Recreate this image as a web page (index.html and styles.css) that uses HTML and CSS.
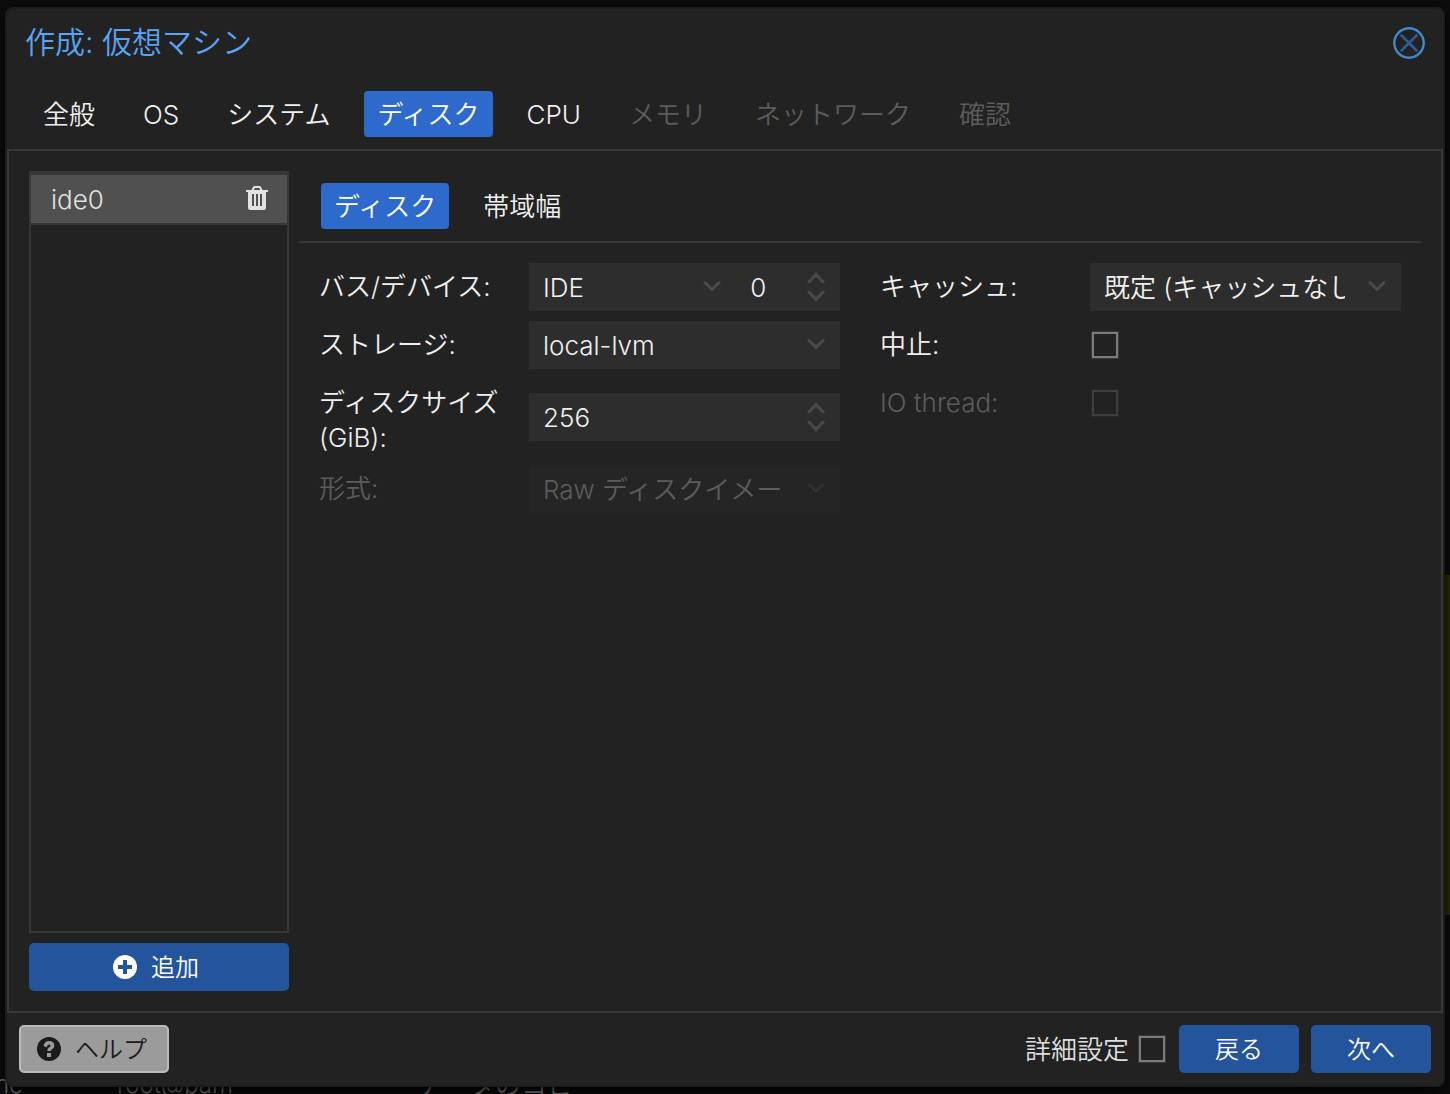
FILE: index.html
```html
<!DOCTYPE html>
<html lang="ja">
<head>
<meta charset="utf-8">
<meta name="viewport" content="width=device-width, initial-scale=1">
<title>作成: 仮想マシン</title>
<link rel="stylesheet" href="styles.css">
</head>
<body>
<svg class="defs" aria-hidden="true">
  <symbol id="down" viewBox="0 0 18 12"><path d="M2 2.5l7 7 7-7" fill="none" stroke="currentColor" stroke-width="3" stroke-linecap="round"/></symbol>
  <symbol id="updown" viewBox="0 0 18 30"><path d="M2 10l7-7.500 7 7.500M2 20l7 7.500 7-7.500" fill="none" stroke="currentColor" stroke-width="3" stroke-linecap="round"/></symbol>
</svg>
<div class="backdrop" aria-hidden="true">
  <div class="notice-strip"></div>
  <div class="log-row"><span class="log-node">ne</span><span class="log-user">root@pam</span><span class="log-task">データのコピー</span></div>
</div>
<main class="dialog">
  <header class="dialog-header">
    <h1 class="title">作成: 仮想マシン</h1>
    <button class="close" type="button" aria-label="閉じる">
      <svg width="32" height="32" viewBox="0 0 32 32" fill="none"><circle cx="16" cy="16" r="14.700" stroke="#4387cb" stroke-width="2.400"/><path d="M8.500 8.500l15 15M23.500 8.500l-15 15" stroke="#2d5c98" stroke-width="2.600" stroke-linecap="round"/></svg>
    </button>
  </header>
  <nav class="tabs">
    <button class="tab" type="button">全般</button>
    <button class="tab" type="button">OS</button>
    <button class="tab" type="button">システム</button>
    <button class="tab active" type="button">ディスク</button>
    <button class="tab" type="button">CPU</button>
    <button class="tab" type="button" disabled>メモリ</button>
    <button class="tab" type="button" disabled>ネットワーク</button>
    <button class="tab" type="button" disabled>確認</button>
  </nav>
  <section class="content">
    <aside class="disks">
      <ul class="disk-list">
        <li class="disk-item">
          <span>ide0</span>
          <button class="trash" type="button" aria-label="削除">
            <svg width="22" height="26" viewBox="0 0 22 26"><path fill="#e2e2e2" fill-rule="evenodd" d="M0 4h5.500l1.300-2.700Q7.300 0 8.800 0h4.400q1.500 0 2 1.300L16.500 4H22v2h-2v15.500q0 2.500-2.500 2.500h-13Q2 24 2 21.500V6H0zM7.800 4h6.400l-1-2H8.800zM6 8v12h2V8zm4 0v12h2V8zm4 0v12h2V8z"/></svg>
          </button>
        </li>
      </ul>
      <button class="button primary" type="button">
        <svg width="24" height="24" viewBox="0 0 24 24"><circle cx="12" cy="12" r="12" fill="#fff"/><path d="M10 5h4v5h5v4h-5v5h-4v-5H5v-4h5z" fill="#24549c"/></svg>
        追加
      </button>
    </aside>
    <div class="editor">
      <nav class="tabs subtabs">
        <button class="tab active" type="button">ディスク</button>
        <button class="tab" type="button">帯域幅</button>
      </nav>
      <form class="form">
        <div class="column">
          <div class="row">
            <label class="label" for="bus">バス/デバイス:</label>
            <div class="fields">
              <div class="field bus"><select class="control" id="bus"><option>IDE</option></select><svg class="arrow"><use href="#down"/></svg></div>
              <div class="field device"><input class="control" type="number" value="0" aria-label="デバイス"><svg class="arrow spin"><use href="#updown"/></svg></div>
            </div>
          </div>
          <div class="row">
            <label class="label" for="storage">ストレージ:</label>
            <div class="fields"><div class="field"><select class="control" id="storage"><option>local-lvm</option></select><svg class="arrow"><use href="#down"/></svg></div></div>
          </div>
          <div class="row">
            <label class="label" for="size">ディスクサイズ (GiB):</label>
            <div class="fields"><div class="field"><input class="control" type="number" id="size" value="256"><svg class="arrow spin"><use href="#updown"/></svg></div></div>
          </div>
          <div class="row off">
            <label class="label" for="format">形式:</label>
            <div class="fields"><div class="field"><select class="control" id="format" disabled><option>Raw ディスクイメージ (raw)</option></select><svg class="arrow"><use href="#down"/></svg></div></div>
          </div>
        </div>
        <div class="column">
          <div class="row">
            <label class="label" for="cache">キャッシュ:</label>
            <div class="fields"><div class="field"><select class="control" id="cache"><option>既定 (キャッシュなし)</option></select><svg class="arrow"><use href="#down"/></svg></div></div>
          </div>
          <div class="row">
            <label class="label" for="discard">中止:</label>
            <div class="fields"><input class="check" type="checkbox" id="discard"></div>
          </div>
          <div class="row off">
            <label class="label" for="iothread">IO thread:</label>
            <div class="fields"><input class="check" type="checkbox" id="iothread" disabled></div>
          </div>
        </div>
      </form>
    </div>
  </section>
  <footer class="footer">
    <button class="button help" type="button">
      <svg width="24" height="24" viewBox="0 0 24 24"><circle cx="12" cy="12" r="12" fill="#1b1b1b"/><path d="M6.500 9Q7.500 4 12 4q5.300.2 5.300 4.700 0 2.300-2.300 3.500-1.200.8-1.200 1.800h-3.500q0-2.600 1.800-3.700 1.700-.8 1.500-1.800-.3-1.200-1.700-1.100-1.300 0-2.200 2.800zM10 16h4v4h-4z" fill="#9b9b9b"/></svg>
      ヘルプ
    </button>
    <label class="advanced">詳細設定 <input class="check" type="checkbox"></label>
    <button class="button primary wide" type="button">戻る</button>
    <button class="button primary wide" type="button">次へ</button>
  </footer>
</main>
</body>
</html>
```
FILE: styles.css
```css
* { box-sizing: border-box; }
body {
  margin: 0;
  min-height: 100vh;
  padding: 7px 5px;
  display: flex;
  background: #0d0d0d;
  color: #f0f0f0;
  font: 350 26px/35px Inter, "Noto Sans CJK JP", sans-serif;
}
button, input, select { font: inherit; color: inherit; }
button { border: 0; padding: 0; background: none; }
.defs { position: absolute; width: 0; height: 0; }

.backdrop { position: absolute; inset: 0; overflow: hidden; z-index: -1; }
.notice-strip { position: absolute; right: 0; top: 575px; width: 20px; height: 340px; background: #303200; }
.log-row { position: absolute; left: -5px; bottom: -8px; display: flex; color: #888; font-size: 24px; }
.log-node { width: 122px; }
.log-user { width: 300px; }
.log-task { font-size: 26px; }

.dialog {
  flex: 1;
  min-width: 0;
  display: flex;
  flex-direction: column;
  border: 2px solid #1c1c1c;
  border-radius: 8px;
  background: #222;
  box-shadow: 0 4px 16px #000;
}
.dialog-header { display: flex; justify-content: space-between; align-items: center; height: 70px; padding: 0 18px 2px; }
.title { margin: 0; padding-bottom: 2px; font-size: 30px; font-weight: 350; color: #5ba4f5; }
.close { display: flex; }

.tabs { display: flex; gap: 20px; padding: 12px 22px; }
.tab { height: 46px; padding: 0 14px; border-radius: 4px; white-space: nowrap; }
.tab.active { padding: 0 13px; background: #2d6acb; color: #fff; }
.tab:disabled { color: #5c5c5c; }

.content { flex: 1; display: flex; gap: 10px; padding: 20px; border: 2px solid #373737; }
.disks { width: 260px; display: flex; flex-direction: column; gap: 10px; }
.disk-list { flex: 1; margin: 0; padding: 0; list-style: none; border: 2px solid #373737; border-top-width: 4px; }
.disk-item {
  display: flex;
  justify-content: space-between;
  align-items: center;
  height: 50px;
  padding: 0 19px 0 20px;
  background: #505050;
  border-bottom: 2px solid #373737;
  color: #e2e2e2;
}
.trash { display: flex; }

.button {
  height: 48px;
  display: flex;
  align-items: center;
  justify-content: center;
  gap: 14px;
  padding-right: 6px;
  border-radius: 5px;
  font-size: 24px;
}
.primary { background: #24549c; color: #fff; }
.wide { width: 120px; padding: 0; }
.help { width: 150px; padding-right: 4px; background: #9b9b9b; border: 2px solid #bababa; color: #1b1b1b; }

.editor { flex: 1; min-width: 0; }
.subtabs { border-bottom: 2px solid #373737; }
.form { display: grid; grid-template-columns: 1fr 1fr; gap: 40px; padding: 20px; }
.column { min-width: 0; display: flex; flex-direction: column; gap: 10px; }
.row { display: flex; min-height: 48px; }
.label { flex: none; width: 210px; padding: 6px 20px 0 0; }
.fields { flex: 1; min-width: 0; display: flex; align-items: center; }
.field { position: relative; flex: 1; min-width: 0; }
.field.bus { flex: 2; }
.control {
  display: block;
  width: 100%;
  height: 48px;
  padding: 0 56px 0 14px;
  border: 0;
  border-radius: 0;
  background: #2d2d2d;
  appearance: none;
  -moz-appearance: textfield;
}
.device .control { padding-right: 36px; }
.control::-webkit-inner-spin-button { appearance: none; }
.arrow { position: absolute; right: 15px; top: 17px; width: 18px; height: 12px; color: #4a4a4a; pointer-events: none; }
.arrow.spin { top: 9px; height: 30px; }
.off { color: #5c5c5c; }
.off .control { background: #252525; color: #5c5c5c; opacity: 1; }
.off .arrow { color: #303030; }

.check { flex: none; width: 26px; height: 26px; margin: 0 2px; border: 2px solid #7c7c7c; outline: 1px solid #383838; appearance: none; }
.check:disabled { border-color: #3e3e3e; outline-color: #282828; }

.footer { display: flex; align-items: center; gap: 12px; padding: 12px; }
.advanced { display: flex; align-items: center; gap: 8px; margin-left: auto; color: #dedede; }
```
